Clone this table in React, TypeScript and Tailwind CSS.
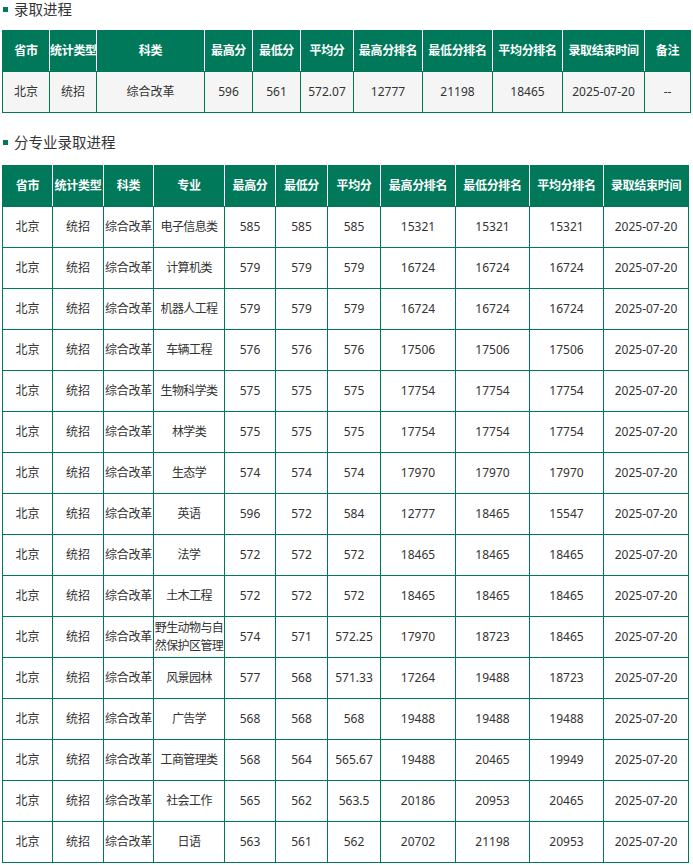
import React from "react";

const font = "font-['Noto_Sans','Noto_Sans_CJK_SC',sans-serif]";

const summaryHead = ["省市", "统计类型", "科类", "最高分", "最低分", "平均分", "最高分排名", "最低分排名", "平均分排名", "录取结束时间", "备注"];
const summaryCols = [47, 47, 108, 48, 48, 53, 69, 70, 70, 82, 46];
const summaryRow = ["北京", "统招", "综合改革", "596", "561", "572.07", "12777", "21198", "18465", "2025-07-20", "--"];

const majorHead = ["省市", "统计类型", "科类", "专业", "最高分", "最低分", "平均分", "最高分排名", "最低分排名", "平均分排名", "录取结束时间"];
const majorCols = [50, 51, 50, 71, 51, 52, 53, 75, 74, 74, 85];

const majors: [string, string, string, string, string, string, string][] = [
  ["电子信息类", "585", "585", "585", "15321", "15321", "15321"],
  ["计算机类", "579", "579", "579", "16724", "16724", "16724"],
  ["机器人工程", "579", "579", "579", "16724", "16724", "16724"],
  ["车辆工程", "576", "576", "576", "17506", "17506", "17506"],
  ["生物科学类", "575", "575", "575", "17754", "17754", "17754"],
  ["林学类", "575", "575", "575", "17754", "17754", "17754"],
  ["生态学", "574", "574", "574", "17970", "17970", "17970"],
  ["英语", "596", "572", "584", "12777", "18465", "15547"],
  ["法学", "572", "572", "572", "18465", "18465", "18465"],
  ["土木工程", "572", "572", "572", "18465", "18465", "18465"],
  ["野生动物与自然保护区管理", "574", "571", "572.25", "17970", "18723", "18465"],
  ["风景园林", "577", "568", "571.33", "17264", "19488", "18723"],
  ["广告学", "568", "568", "568", "19488", "19488", "19488"],
  ["工商管理类", "568", "564", "565.67", "19488", "20465", "19949"],
  ["社会工作", "565", "562", "563.5", "20186", "20953", "20465"],
  ["日语", "563", "561", "562", "20702", "21198", "20953"],
];

function Title({ text }: { text: string }) {
  return (
    <div className="flex items-center gap-[6px] pl-[1px] text-[14.5px] leading-[18px] text-[#333]">
      <span className="w-[5px] h-[5px] bg-[#00795b]" />
      <span>{text}</span>
    </div>
  );
}

function Head({ labels, cols }: { labels: string[]; cols: number[] }) {
  return (
    <>
      <colgroup>
        {cols.map((w, i) => (
          <col key={i} style={{ width: w }} />
        ))}
      </colgroup>
      <thead>
        <tr className="h-[41px] bg-[#00795b] text-white font-bold text-[12px]">
          {labels.map((h, i) => (
            <th
              key={i}
              className="border-x border-white first:border-l-[#00795b] last:border-r-[#00795b] border-y border-y-[#00795b] px-0 whitespace-nowrap tracking-[-0.3px]"
            >
              {h}
            </th>
          ))}
        </tr>
      </thead>
    </>
  );
}

const cell = "border border-[#00795b] text-center p-0";

export default function App() {
  return (
    <div className={`${font} w-[693px] px-[2px] bg-white`}>
      <Title text="录取进程" />
      <table className="mt-[12px] w-[688px] table-fixed border-collapse text-[12px] text-[#333]">
        <Head labels={summaryHead} cols={summaryCols} />
        <tbody>
          <tr className="h-[41px] bg-[#f5f5f5]">
            {summaryRow.map((c, i) => (
              <td key={i} className={cell}>
                {c}
              </td>
            ))}
          </tr>
        </tbody>
      </table>

      <div className="mt-[20px]">
        <Title text="分专业录取进程" />
      </div>
      <table className="mt-[14px] w-[686px] table-fixed border-collapse text-[12px] text-[#333]">
        <Head labels={majorHead} cols={majorCols} />
        <tbody>
          {majors.map((m, r) => (
            <tr key={r} className="h-[41px] bg-white">
              <td className={cell}>北京</td>
              <td className={cell}>统招</td>
              <td className={`${cell} whitespace-nowrap tracking-[-0.3px]`}>综合改革</td>
              <td className={`${cell} leading-[18px] tracking-[-0.6px]`}>{m[0]}</td>
              {m.slice(1).map((c, i) => (
                <td key={i} className={cell}>
                  {c}
                </td>
              ))}
              <td className={cell}>2025-07-20</td>
            </tr>
          ))}
        </tbody>
      </table>
    </div>
  );
}
